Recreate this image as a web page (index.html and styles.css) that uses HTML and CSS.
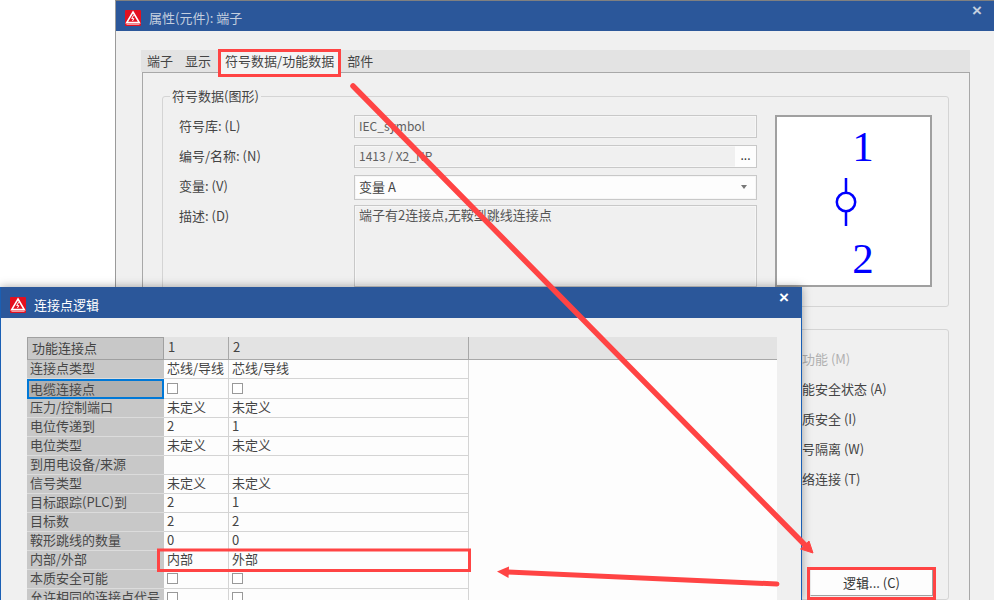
FILE: index.html
```html
<!DOCTYPE html>
<html lang="zh-CN">
<head>
    <meta charset="UTF-8">
    <meta name="viewport" content="width=device-width, initial-scale=1.0">
    <title>连接点逻辑</title>
    <link rel="stylesheet" href="styles.css">
</head>
<body>
    <!-- 后面的窗口 -->
    <div class="window window-back">
        <div class="titlebar">
            <svg class="app-icon" viewBox="0 0 16 16">
                <rect width="16" height="16" rx="1" fill="#e3101f"/>
                <path d="M8 2 L14.3 12.6 H1.7 Z" fill="none" stroke="#fff" stroke-width="1.6"/>
                <path d="M8.6 5.2 L6.7 8.6 H8.8 L7.5 11" fill="none" stroke="#fff" stroke-width="1"/>
                <path d="M1.5 14.5 H14.5" stroke="#f7b9be" stroke-width="0.8"/>
            </svg>
            <span class="title title-inactive">属性(元件): 端子</span>
            <span class="close close-inactive">×</span>
        </div>
        <div class="window-body">
            <div class="tabs">
                <span class="tab">端子</span>
                <span class="tab">显示</span>
                <span class="tab tab-active">符号数据/功能数据</span>
                <span class="tab">部件</span>
            </div>
            <div class="tab-panel">
                <fieldset class="group">
                    <legend>符号数据(图形)</legend>
                    <div class="symbol-layout">
                        <div class="form">
                            <div class="form-row row-lib">
                                <label>符号库: (L)</label>
                                <div class="field">IEC_symbol</div>
                            </div>
                            <div class="form-row row-name">
                                <label>编号/名称: (N)</label>
                                <div class="field field-split">
                                    <span class="field-text">1413 / X2_NP</span>
                                    <span class="field-more">...</span>
                                </div>
                            </div>
                            <div class="form-row row-var">
                                <label>变量: (V)</label>
                                <div class="field field-select">
                                    <span>变量 A</span>
                                    <i class="caret"></i>
                                </div>
                            </div>
                            <div class="form-row row-desc">
                                <label>描述: (D)</label>
                                <div class="field field-area">端子有2连接点,无鞍型跳线连接点</div>
                            </div>
                        </div>
                        <div class="preview">
                            <svg viewBox="0 0 153 168" width="153" height="168">
                                <text x="86" y="44" class="symbol-num">1</text>
                                <text x="86" y="156" class="symbol-num">2</text>
                                <path d="M69 61 V76 M69 94 V109" stroke="#0000ff" stroke-width="2.5" fill="none"/>
                                <circle cx="69" cy="85" r="9.2" stroke="#0000ff" stroke-width="2.5" fill="none"/>
                            </svg>
                        </div>
                    </div>
                </fieldset>
                <div class="group group-options">
                    <div class="option option-off">主功能 (M)</div>
                    <div class="option">功能安全状态 (A)</div>
                    <div class="option">本质安全 (I)</div>
                    <div class="option">信号隔离 (W)</div>
                    <div class="option">网络连接 (T)</div>
                    <button class="logic-btn">逻辑... (C)</button>
                </div>
            </div>
        </div>
    </div>

    <!-- 前面的窗口 -->
    <div class="window window-front">
        <div class="titlebar">
            <svg class="app-icon" viewBox="0 0 16 16">
                <rect width="16" height="16" rx="1" fill="#e3101f"/>
                <path d="M8 2 L14.3 12.6 H1.7 Z" fill="none" stroke="#fff" stroke-width="1.6"/>
                <path d="M8.6 5.2 L6.7 8.6 H8.8 L7.5 11" fill="none" stroke="#fff" stroke-width="1"/>
                <path d="M1.5 14.5 H14.5" stroke="#f7b9be" stroke-width="0.8"/>
            </svg>
            <span class="title">连接点逻辑</span>
            <span class="close">×</span>
        </div>
        <div class="logic-body">
            <table class="logic-table">
                <colgroup>
                    <col class="col-name"><col class="col-one"><col class="col-two"><col>
                </colgroup>
                <thead>
                    <tr>
                        <th class="corner">功能连接点</th>
                        <th>1</th>
                        <th>2</th>
                        <th class="head-fill"></th>
                    </tr>
                </thead>
                <tbody>
                    <tr><th>连接点类型</th><td>芯线/导线</td><td>芯线/导线</td></tr>
                    <tr><th class="selected">电缆连接点</th><td><i class="check"></i></td><td><i class="check"></i></td></tr>
                    <tr><th>压力/控制端口</th><td>未定义</td><td>未定义</td></tr>
                    <tr><th>电位传递到</th><td>2</td><td>1</td></tr>
                    <tr><th>电位类型</th><td>未定义</td><td>未定义</td></tr>
                    <tr><th>到用电设备/来源</th><td></td><td></td></tr>
                    <tr><th>信号类型</th><td>未定义</td><td>未定义</td></tr>
                    <tr><th>目标跟踪(PLC)到</th><td>2</td><td>1</td></tr>
                    <tr><th>目标数</th><td>2</td><td>2</td></tr>
                    <tr><th>鞍形跳线的数量</th><td>0</td><td>0</td></tr>
                    <tr><th>内部/外部</th><td>内部</td><td>外部</td></tr>
                    <tr><th>本质安全可能</th><td><i class="check"></i></td><td><i class="check"></i></td></tr>
                    <tr><th>允许相同的连接点代号</th><td><i class="check"></i></td><td><i class="check"></i></td></tr>
                </tbody>
            </table>
        </div>
    </div>

    <!-- 红色标注 -->
    <svg class="marks" viewBox="0 0 994 600" width="994" height="600">
        <g fill="none" stroke="#ff4444" stroke-width="3">
            <rect x="219.5" y="50.5" width="120" height="25"/>
            <rect x="158.5" y="550" width="311" height="20.5"/>
            <rect x="808.5" y="568.5" width="126" height="30"/>
        </g>
        <path d="M353 86 L805 545" stroke="#ff4444" stroke-width="5.5" stroke-linecap="round" fill="none"/>
        <path d="M813 553 L800.5 549 L809 541 Z" fill="#ff4444" stroke="#ff4444" stroke-width="1"/>
        <path d="M777 584 L506 572" stroke="#ff4444" stroke-width="5" stroke-linecap="round" fill="none"/>
        <path d="M497 571.5 L509 566.5 L508.5 578 Z" fill="#ff4444"/>
    </svg>
</body>
</html>
```

FILE: styles.css
```css
* {
    box-sizing: border-box;
}
body {
    font-family: "Noto Sans CJK SC", "Noto Sans", sans-serif;
    font-size: 13px;
    margin: 0;
    width: 994px;
    height: 600px;
    overflow: hidden;
    position: relative;
    background-color: white;
    color: #444;
}
.window {
    position: absolute;
    overflow: hidden;
    background-color: #f0f0f0;
}
.window-back {
    left: 115px;
    top: 0;
    width: 879px;
    height: 600px;
    border-top: 1px solid #808080;
    border-left: 1px solid #9a9a9a;
}
.window-front {
    left: 0;
    top: 287px;
    width: 802px;
    height: 313px;
    border-left: 1px solid #1a5fb4;
    border-right: 1px solid #1a5fb4;
    box-shadow: 0 0 9px rgba(0, 0, 0, 0.35);
}
.titlebar {
    display: flex;
    align-items: center;
    height: 30px;
    padding: 4px 12px 0 9px;
    background-color: #2b579a;
}
.window-front .titlebar {
    height: 31px;
}
.app-icon {
    width: 16px;
    height: 16px;
    flex: none;
}
.title {
    margin-left: 8px;
    color: white;
    line-height: 18px;
}
.title-inactive {
    color: #c4cfdf;
}
.close {
    margin-left: auto;
    color: white;
    font-family: "Liberation Sans", sans-serif;
    font-size: 17px;
    font-weight: bold;
    line-height: 14px;
    margin-top: -14px;
}
.close-inactive {
    color: #c4cfdf;
}

/* 属性窗口 */
.window-body {
    padding: 19px 24px 0 25px;
}
.tabs {
    display: flex;
    height: 22px;
    background-color: #e3e3e3;
    padding-left: 0;
}
.tab {
    padding: 0 6px;
    line-height: 21px;
}
.tab-active {
    margin: 0 0 0 1px;
    height: 24px;
    padding: 0 7px 0 7px;
    line-height: 22px;
    background-color: #f4f4f4;
}
.tab-panel {
    margin-left: 1px;
    height: 528px;
    padding: 14px 20px 0 19px;
    border: 1px solid #a8a8a8;
    border-bottom: none;
}
.group {
    margin: 0;
    min-width: 0;
    border: 1px solid #d4d4d4;
    border-radius: 3px;
}
fieldset.group {
    padding: 10px 16px 19px 16px;
}
legend {
    padding: 0 2px;
    margin-left: -9px;
    line-height: 18px;
}
.symbol-layout {
    display: flex;
    gap: 18px;
}
.form {
    width: 578px;
}
.form-row {
    display: flex;
}
.form-row label {
    flex: none;
    width: 175px;
    line-height: 22px;
}
.row-name, .row-var {
    margin-top: 7px;
}
.row-desc {
    margin-top: 5px;
}
.field {
    flex: 1;
    height: 23px;
    padding: 0 3px 0 4px;
    border: 1px solid #c8c8c8;
    box-shadow: inset 0 0 0 1px #f6f6f6;
    font-size: 12px;
    line-height: 19px;
    color: #606060;
}
.field-split {
    display: flex;
    padding-right: 0;
}
.field-text {
    flex: 1;
}
.field-more {
    width: 21px;
    background-color: #fdfdfd;
    text-align: center;
    line-height: 17px;
    color: #333;
}
.field-select {
    display: flex;
    justify-content: space-between;
    align-items: center;
    height: 25px;
    padding-bottom: 2px;
    font-size: 13px;
    background-color: #fdfdfd;
    color: #444;
}
.caret {
    width: 0;
    height: 0;
    margin-right: 6px;
    border-left: 3px solid transparent;
    border-right: 3px solid transparent;
    border-top: 4px solid #777;
}
.field-area {
    height: 82px;
    padding: 0 4px;
    font-size: 13px;
    line-height: 18px;
    color: #555;
}
.preview {
    flex: none;
    width: 157px;
    height: 172px;
    border: 2px solid #a0a0a0;
    background-color: white;
}
.preview svg {
    display: block;
}
.symbol-num {
    font-family: "Liberation Serif", serif;
    font-size: 43px;
    fill: #0000ff;
    text-anchor: middle;
}
.group-options {
    margin-top: 22px;
    height: 271px;
    padding: 14px 0 0 626px;
}
.option {
    line-height: 30px;
    white-space: nowrap;
}
.option-off {
    color: #b0b0b0;
}
.logic-btn {
    display: block;
    width: 123px;
    height: 27px;
    margin: 75px 0 0 21px;
    padding: 0;
    font: inherit;
    color: #333;
    background-color: #fdfdfd;
    border: 1px solid #ececec;
    border-right-color: #a0a0a0;
    border-bottom-color: #a0a0a0;
}

/* 连接点逻辑窗口 */
.logic-body {
    padding: 19px 24px 0 26px;
}
.logic-table {
    width: 750px;
    table-layout: fixed;
    border-spacing: 0;
    background-color: #fdfdfd;
    line-height: 16px;
}
.col-name {
    width: 137px;
}
.col-one {
    width: 65px;
}
.col-two {
    width: 240px;
}
.logic-table th, .logic-table td {
    height: 19px;
    padding: 0 0 2px 3px;
    font-weight: normal;
    text-align: left;
    white-space: nowrap;
    border-right: 1px solid #d4d4d4;
    border-bottom: 1px solid #d4d4d4;
}
.logic-table tbody th {
    padding-left: 3px;
    background-color: #c8c8c8;
    border-right: none;
    border-bottom-color: #dcdcdc;
    color: #484848;
}
.logic-table thead th {
    height: 23px;
    padding-left: 4px;
    background-color: #e3e3e3;
    border-right-color: #a8a8a8;
    border-bottom-color: #a8a8a8;
}
.logic-table thead th.corner {
    padding-left: 4px;
    background-color: #c8c8c8;
    border: 1px solid #a0a0a0;
}
.logic-table thead th.head-fill {
    border-right: none;
}
.logic-table tbody th.selected {
    padding: 0 0 0 1px;
    background-color: #b0b0b0;
    border: 2px solid #0078d7;
}
.check {
    display: block;
    width: 11px;
    height: 11px;
    margin-top: 1px;
    border: 1px solid #999;
    background-color: white;
}

/* 标注盖在两个窗口上面 */
.marks {
    position: absolute;
    left: 0;
    top: 0;
}
```
